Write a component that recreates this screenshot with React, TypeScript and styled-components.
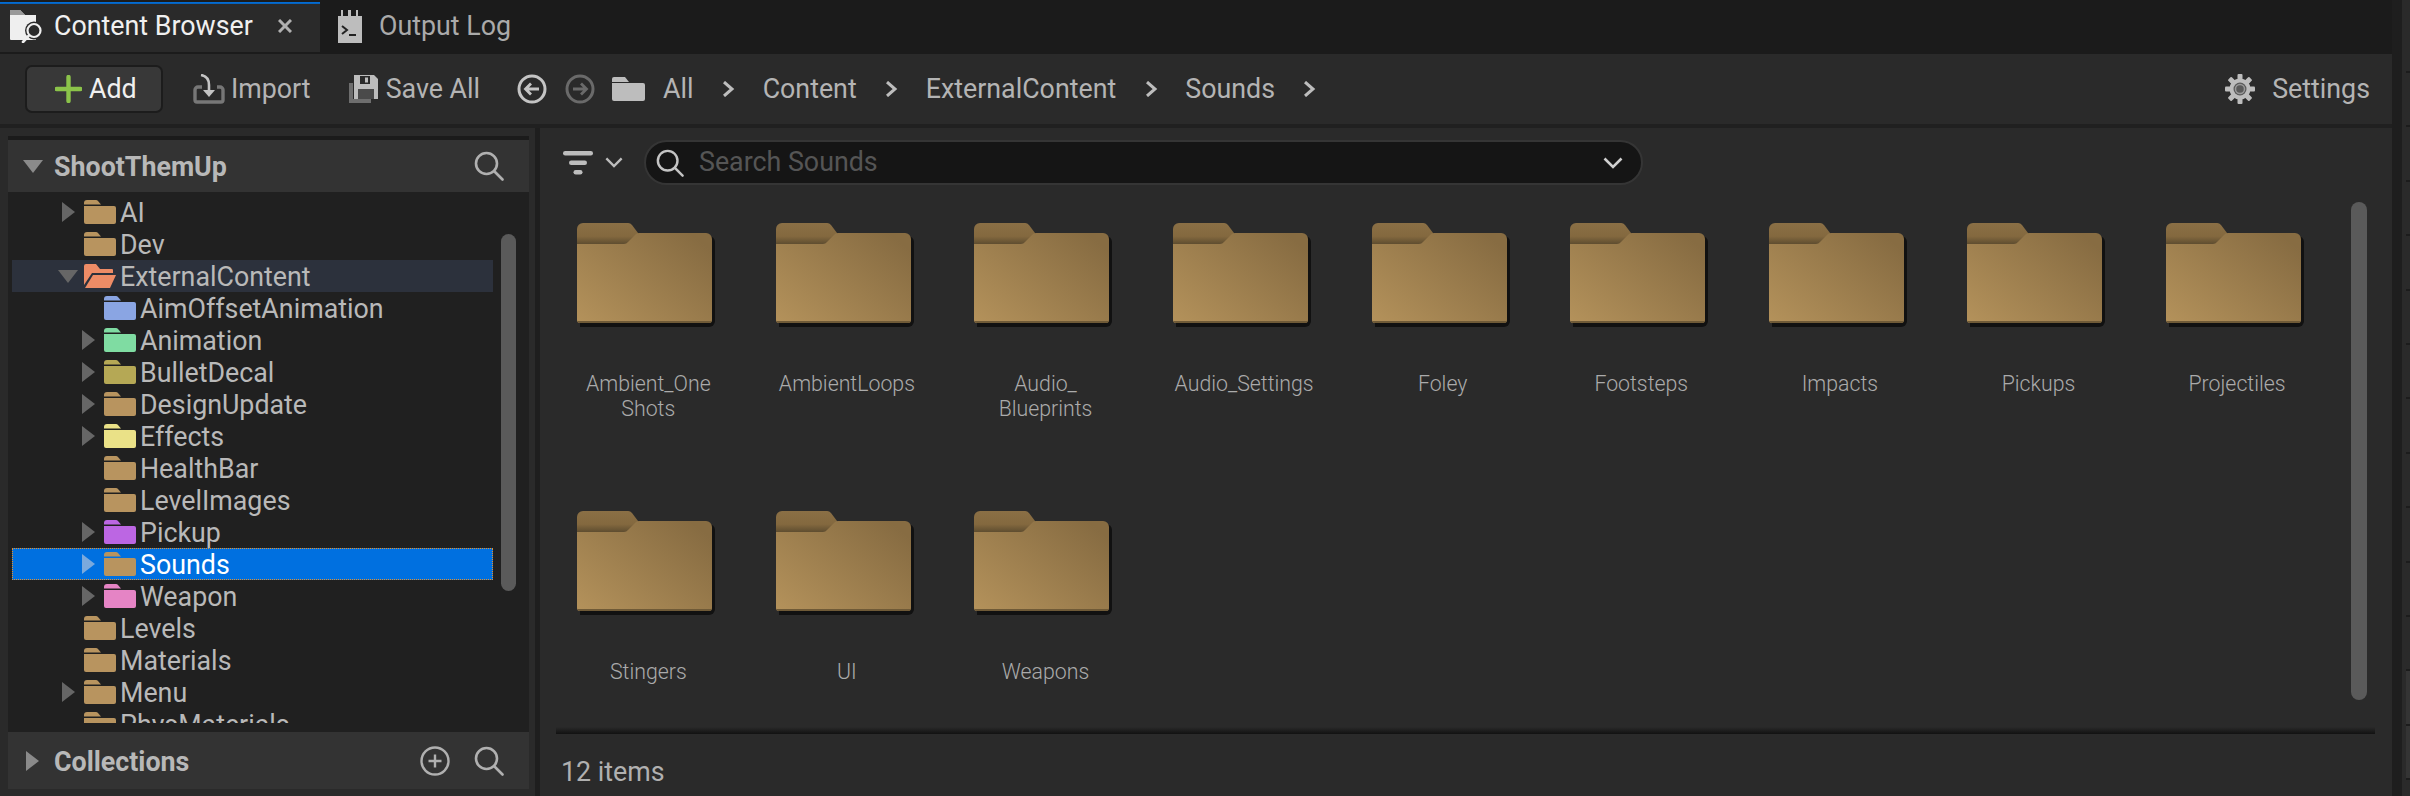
import React from 'react';
import styled, { createGlobalStyle } from 'styled-components';

const GlobalStyle = createGlobalStyle`
  html, body {
    margin: 0;
    padding: 0;
    background: #2a2a2a;
    overflow: hidden;
  }
  * {
    box-sizing: border-box;
  }
`;

const UI_FONT_SIZE = '26.8px';

const Page = styled.div`
  width: 2410px;
  height: 796px;
  display: flex;
  overflow: hidden;
  font-family: Roboto, 'Liberation Sans', sans-serif;
  color: #bcbcbc;
`;
const Main = styled.div`
  width: 2392px;
  display: flex;
  flex-direction: column;
`;
const EdgeGap = styled.div`
  width: 10px;
  background: #1e1e1e;
`;
const EdgeRail = styled.div`
  width: 8px;
  background: #2a2a2a;
  padding: 71px 0 0 4px;
`;
const EdgeTicks = styled.div`
  height: 100%;
  background:
    repeating-linear-gradient(
      to bottom,
      #1c1c1c 0,
      #1c1c1c 2px,
      transparent 2px,
      transparent 54.4px
    ),
    linear-gradient(#343434, #343434) 0 598px / 100% 109px no-repeat;
`;

const TabBar = styled.div`
  height: 54px;
  flex: none;
  display: flex;
  background: #1b1b1b;
  padding-bottom: 2px;
`;
const Tab = styled.div<{ $active?: boolean }>`
  display: flex;
  align-items: center;
  height: 52px;
  padding: 0 0 0 10px;
  width: ${(p) => (p.$active ? '320px' : 'auto')};
  margin-left: ${(p) => (p.$active ? '0' : '8px')};
  color: ${(p) => (p.$active ? '#f0f0f0' : '#aaa')};
  background: ${(p) =>
    p.$active ? 'linear-gradient(#1b1b1b 2px, #0070e0 2px, #0a5fb0 4px, #2a2a2a 4px)' : 'none'};
  font-size: ${UI_FONT_SIZE};
  svg {
    flex: none;
    margin-right: ${(p) => (p.$active ? '12px' : '17px')};
  }
`;
const TabClose = styled.span`
  margin-left: 25px;
  display: flex;
  svg {
    margin: 0;
  }
`;

const Toolbar = styled.div`
  height: 70px;
  flex: none;
  display: flex;
  align-items: center;
  background: #2a2a2a;
  padding-left: 25px;
  font-size: ${UI_FONT_SIZE};
`;
const AddButton = styled.div`
  width: 138px;
  height: 48px;
  display: flex;
  align-items: center;
  padding-left: 28px;
  gap: 7px;
  background: #383838;
  border: 2px solid #1c1c1c;
  border-radius: 7px;
  color: #f0f0f0;
  margin-right: 30px;
`;
const ToolButton = styled.div<{ $gap: number; $right: number }>`
  display: flex;
  align-items: center;
  gap: ${(p) => p.$gap}px;
  margin-right: ${(p) => p.$right}px;
  color: #b4b4b4;
`;
const NavButtons = styled.div`
  display: flex;
  align-items: center;
  gap: 18px;
`;
const NavArrow = styled.svg<{ $flip?: boolean }>`
  display: block;
  transform: ${(p) => (p.$flip ? 'scaleX(-1)' : 'none')};
`;
const Crumbs = styled.div`
  display: flex;
  align-items: center;
  margin-left: 17px;
  color: #b4b4b4;
  svg {
    flex: none;
  }
`;
const CrumbText = styled.span<{ $first?: boolean }>`
  margin: 0 28.5px 0 ${(p) => (p.$first ? '18px' : '27.5px')};
`;
const SettingsButton = styled.div`
  margin-left: auto;
  margin-right: 22px;
  display: flex;
  align-items: center;
  gap: 17px;
  color: #b4b4b4;
`;
const ToolbarGap = styled.div`
  height: 4px;
  flex: none;
  background: #202020;
`;

const Body = styled.div`
  flex: 1;
  display: flex;
  min-height: 0;
  background: #2a2a2a;
`;
const Sidebar = styled.aside`
  width: 527px;
  margin-left: 8px;
  padding: 8px 6px 7px 0;
  display: flex;
  flex-direction: column;
`;
const SectionHeader = styled.div<{ $tall?: boolean; $top?: boolean }>`
  height: ${(p) => (p.$tall ? '52px' : '57px')};
  flex: none;
  display: flex;
  align-items: center;
  background: #333;
  border-top: ${(p) => (p.$top ? '4px solid #1b1b1b' : 'none')};
  box-sizing: ${(p) => (p.$top ? 'content-box' : 'border-box')};
  font-size: ${UI_FONT_SIZE};
  font-weight: 700;
  color: #b8b8b8;
`;
const HeaderTitle = styled.span`
  padding-top: 2px;
`;
const HeaderArrow = styled.span<{ $open?: boolean }>`
  width: 0;
  height: 0;
  flex: none;
  ${(p) =>
    p.$open
      ? `border-left: 10px solid transparent;
         border-right: 10px solid transparent;
         border-top: 13px solid #8a8a8a;
         margin: 0 11px 0 15px;`
      : `border-top: 10px solid transparent;
         border-bottom: 10px solid transparent;
         border-left: 13px solid #8a8a8a;
         margin: 0 15px 0 18px;`}
`;
const HeaderActions = styled.div`
  margin-left: auto;
  margin-right: 25px;
  display: flex;
  align-items: center;
  gap: 24px;
`;
const Tree = styled.div`
  flex: 1;
  min-height: 0;
  background: #202020;
  padding: 4px 0 9px 4px;
  position: relative;
`;
const TreeClip = styled.div`
  height: 100%;
  overflow: hidden;
`;
const TreeScrollThumb = styled.div`
  position: absolute;
  left: 493px;
  top: 42px;
  width: 15px;
  height: 357px;
  border-radius: 8px;
  background: #5a5a5a;
`;
const Row = styled.div<{ $level: number; $state?: 'selected' | 'open' }>`
  width: 481px;
  height: 32px;
  display: flex;
  align-items: center;
  padding-left: ${(p) => 50 + p.$level * 20}px;
  font-size: ${UI_FONT_SIZE};
  color: ${(p) => (p.$state === 'selected' ? '#fff' : '#b9b9b9')};
  background: ${(p) =>
    p.$state === 'selected' ? '#0070e0' : p.$state === 'open' ? '#2c313c' : 'transparent'};
  outline: ${(p) => (p.$state === 'selected' ? '1px dotted #e8912a' : 'none')};
  outline-offset: -1px;
`;
const ExpanderSlot = styled.span`
  width: 22px;
  flex: none;
  display: flex;
`;
const ExpanderRight = styled.span<{ $light?: boolean }>`
  width: 0;
  height: 0;
  border-top: 10px solid transparent;
  border-bottom: 10px solid transparent;
  border-left: 13px solid ${(p) => (p.$light ? '#7aa9dd' : '#666')};
`;
const ExpanderDown = styled.span`
  width: 0;
  height: 0;
  margin-left: -4px;
  border-left: 10px solid transparent;
  border-right: 10px solid transparent;
  border-top: 13px solid #666;
`;
const TreeFolderArt = styled.svg`
  flex: none;
`;
const TreeLabel = styled.span`
  margin-left: 4px;
  padding-top: 1px;
  white-space: nowrap;
`;

const ContentPanel = styled.section`
  flex: 1;
  min-width: 0;
  border-left: 5px solid #1e1e1e;
  display: flex;
  flex-direction: column;
  position: relative;
`;
const FilterRow = styled.div`
  height: 45px;
  flex: none;
  margin-top: 12px;
  display: flex;
  align-items: center;
  padding-left: 23px;
`;
const FilterChevron = styled.span`
  display: flex;
  margin: 0 21px 0 12px;
`;
const SearchBox = styled.div`
  width: 999px;
  height: 45px;
  display: flex;
  align-items: center;
  padding: 0 18px 0 10px;
  border: 2px solid #353535;
  border-radius: 23px;
  background: #151515;
  color: #555;
  font-size: ${UI_FONT_SIZE};
  span {
    margin-left: 15px;
    flex: 1;
    padding-bottom: 2px;
  }
`;
const Grid = styled.div`
  flex: 1;
  min-height: 0;
  display: grid;
  grid-template-columns: repeat(9, 198.6px);
  grid-auto-rows: 288px;
  padding: 38px 0 0 9px;
  overflow: hidden;
`;
const Tile = styled.div`
  display: flex;
  flex-direction: column;
  align-items: center;
`;
const FolderArt = styled.svg`
  display: block;
  margin-right: 3px;
`;
const TileLabel = styled.div`
  margin-top: 42px;
  font-size: 21.3px;
  font-weight: 300;
  line-height: 25px;
  text-align: center;
  white-space: pre-line;
  color: #ababab;
`;
const GridScrollThumb = styled.div`
  position: absolute;
  left: 1811px;
  top: 74px;
  width: 16px;
  height: 498px;
  border-radius: 8px;
  background: #5a5a5a;
`;
const ShadowLine = styled.div`
  height: 7px;
  flex: none;
  margin: 0 17px 0 16px;
  background: linear-gradient(to bottom, rgba(17, 17, 17, 0), #111);
`;
const StatusBar = styled.div`
  height: 62px;
  flex: none;
  padding: 21px 0 0 21px;
  line-height: 34px;
  font-size: ${UI_FONT_SIZE};
  color: #b0b0b0;
`;

const SearchIcon = ({ size = 30, color = '#b0b0b0' }: { size?: number; color?: string }) => (
  <svg width={size} height={size} viewBox="0 0 30 30" fill="none" stroke={color} strokeWidth="2.6" strokeLinecap="round">
    <circle cx="12.5" cy="12.5" r="10.5" />
    <line x1="20.5" y1="20.5" x2="28.5" y2="28.5" />
  </svg>
);

const ContentBrowserIcon = () => (
  <svg width="32" height="34" viewBox="0 0 32 34">
    <path d="M0 1h10l5 5h11v24a1 1 0 0 1-1 1H1a1 1 0 0 1-1-1z" fill="#efefef" />
    <path d="M0 1h10l5 5H0z" fill="#9a9a9a" />
    <circle cx="24" cy="21.5" r="9" fill="#2a2a2a" />
    <circle cx="24" cy="21.5" r="6.5" fill="none" stroke="#efefef" strokeWidth="2.2" />
    <line x1="18.5" y1="27" x2="13" y2="33" stroke="#efefef" strokeWidth="2.6" strokeLinecap="round" />
  </svg>
);

const OutputLogIcon = () => (
  <svg width="24" height="33" viewBox="0 0 24 33">
    <path d="M0 6h3V0h2v6h5V0h3v6h5V0h2v6h4v27H0z" fill="#bdbdbd" />
    <path d="M4 16l5 4-5 4" fill="none" stroke="#222" strokeWidth="2" />
    <line x1="11" y1="25" x2="18" y2="25" stroke="#222" strokeWidth="2" />
  </svg>
);

const CloseIcon = () => (
  <svg width="14" height="14" viewBox="0 0 14 14" stroke="#b0b0b0" strokeWidth="3">
    <line x1="1" y1="1" x2="13" y2="13" />
    <line x1="13" y1="1" x2="1" y2="13" />
  </svg>
);

const PlusIcon = () => (
  <svg width="27" height="28" viewBox="0 0 27 28" stroke="#8bc34a" strokeWidth="4.4" strokeLinecap="round">
    <line x1="13.5" y1="2" x2="13.5" y2="26" />
    <line x1="1.5" y1="14" x2="25.5" y2="14" />
  </svg>
);

const ImportIcon = () => (
  <svg width="32" height="30" viewBox="0 0 32 30" fill="none">
    <path d="M9 13H5a3 3 0 0 0-3 3v10a2 2 0 0 0 2 2h24a2 2 0 0 0 2-2V16a3 3 0 0 0-3-3h-3" stroke="#777" strokeWidth="3.4" />
    <path d="M8 1c6 1 8 5 8 10v8" stroke="#c4c4c4" strokeWidth="2.6" />
    <path d="M10 16h12l-6 7z" fill="#c4c4c4" />
  </svg>
);

const SaveIcon = () => (
  <svg width="29" height="28" viewBox="0 0 29 28">
    <path d="M0 8h4v16h18v4H0z" fill="#6e6e6e" />
    <path d="M5 0h20l4 4v20H5z" fill="#bdbdbd" />
    <rect x="11" y="1" width="10" height="8" fill="#2a2a2a" />
    <rect x="16" y="2.5" width="3" height="5" fill="#bdbdbd" />
    <rect x="9" y="14" width="16" height="10" fill="#4a4a4a" />
  </svg>
);

const CircleArrow = ({ back, color }: { back?: boolean; color: string }) => (
  <NavArrow $flip={!back} width="30" height="30" viewBox="0 0 30 30" fill="none" stroke={color} strokeWidth="3">
    <circle cx="15" cy="15" r="13" />
    <path d="M22 15H9M14 9.5L8.5 15l5.5 5.5" strokeWidth="2.8" />
  </NavArrow>
);

const CrumbFolder = () => (
  <svg width="33" height="24" viewBox="0 0 33 24" fill="#bdbdbd">
    <path d="M0 2a2 2 0 0 1 2-2h11l4 5H0z" />
    <path d="M0 6h31a2 2 0 0 1 2 2v14a2 2 0 0 1-2 2H2a2 2 0 0 1-2-2z" />
  </svg>
);

const CrumbChevron = () => (
  <svg width="13" height="16" viewBox="0 0 13 16" fill="none" stroke="#bdbdbd" strokeWidth="3">
    <path d="M2 1l8 7-8 7" />
  </svg>
);

const GearIcon = () => (
  <svg width="30" height="30" viewBox="0 0 30 30">
    {[0, 45, 90, 135, 180, 225, 270, 315].map((a) => (
      <rect key={a} x="12.5" y="0" width="5" height="7" rx="1" fill="#bdbdbd" transform={`rotate(${a} 15 15)`} />
    ))}
    <circle cx="15" cy="15" r="10.5" fill="#bdbdbd" />
    <circle cx="15" cy="15" r="6.5" fill="#5a5a5a" />
    <circle cx="15" cy="15" r="4.5" fill="none" stroke="#999" strokeWidth="1.5" />
  </svg>
);

const FilterIcon = () => (
  <svg width="30" height="24" viewBox="0 0 30 24" fill="#bdbdbd">
    <rect x="0" y="0" width="30" height="4.5" rx="2.2" />
    <rect x="6" y="9.5" width="18" height="4.5" rx="2.2" />
    <rect x="10.5" y="19" width="9" height="4.5" rx="2.2" />
  </svg>
);

const SmallChevron = ({ width, color }: { width: number; color: string }) => (
  <svg width={width} height={width * 0.6} viewBox="0 0 20 12" fill="none" stroke={color} strokeWidth="2.6">
    <path d="M1.5 1.5L10 10l8.5-8.5" />
  </svg>
);

const CirclePlusIcon = () => (
  <svg width="30" height="30" viewBox="0 0 30 30" fill="none" stroke="#b0b0b0" strokeWidth="2.4">
    <circle cx="15" cy="15" r="13.5" />
    <path d="M15 8.5v13M8.5 15h13" />
  </svg>
);

const TreeFolder = ({ color }: { color: string }) => (
  <TreeFolderArt width="32" height="24" viewBox="0 0 32 24" fill={color}>
    <path d="M0 3a3 3 0 0 1 3-3h9a3 3 0 0 1 2 1l3 3.5H0z" />
    <path d="M0 6h30a2 2 0 0 1 2 2v14a2 2 0 0 1-2 2H2a2 2 0 0 1-2-2z" />
  </TreeFolderArt>
);

const OpenTreeFolder = ({ color }: { color: string }) => (
  <TreeFolderArt width="32" height="24" viewBox="0 0 32 24" fill={color}>
    <path d="M0 2a2 2 0 0 1 2-2h10l4 5h12a1 1 0 0 1 1 1v3H8L0 21z" />
    <path d="M9 11h23l-6 13H1z" />
  </TreeFolderArt>
);

const BigFolder = () => (
  <FolderArt width="139" height="106" viewBox="0 0 139 106">
    <defs>
      <linearGradient id="folderFront" x1="0" y1="1" x2="1" y2="0.2">
        <stop offset="0" stopColor="#b4925b" />
        <stop offset="1" stopColor="#876c42" />
      </linearGradient>
      <linearGradient id="folderTab" x1="0" y1="0" x2="0" y2="1">
        <stop offset="0" stopColor="#8a6f45" />
        <stop offset="0.6" stopColor="#84693f" />
        <stop offset="1" stopColor="#5a4a2e" />
      </linearGradient>
    </defs>
    <path d="M6 13h126a6 6 0 0 1 6 6v79a6 6 0 0 1-6 6H3v-4z" fill="#0e0e0e" opacity="0.9" />
    <path d="M0 6a6 6 0 0 1 6-6h44a6 6 0 0 1 5 2l6 8v12H0z" fill="url(#folderTab)" />
    <path d="M0 21h47a5 5 0 0 0 4-2l8-8a5 5 0 0 1 3-1h67a6 6 0 0 1 6 6v81a3 3 0 0 1-3 3H3a3 3 0 0 1-3-3z" fill="url(#folderFront)" />
    <path d="M0 98h135a3 3 0 0 1-3 2H3a3 3 0 0 1-3-2z" fill="#6f5a37" />
  </FolderArt>
);

type TreeItem = {
  name: string;
  level: number;
  color: string;
  arrow?: boolean;
  state?: 'selected' | 'open';
};

const TAN = '#b8945f';
const treeItems: TreeItem[] = [
  { name: 'AI', level: 0, color: TAN, arrow: true },
  { name: 'Dev', level: 0, color: TAN },
  { name: 'ExternalContent', level: 0, color: '#ee8c66', arrow: true, state: 'open' },
  { name: 'AimOffsetAnimation', level: 1, color: '#8aa5e3' },
  { name: 'Animation', level: 1, color: '#7fdca2', arrow: true },
  { name: 'BulletDecal', level: 1, color: '#b5a855', arrow: true },
  { name: 'DesignUpdate', level: 1, color: TAN, arrow: true },
  { name: 'Effects', level: 1, color: '#eae187', arrow: true },
  { name: 'HealthBar', level: 1, color: TAN },
  { name: 'LevelImages', level: 1, color: TAN },
  { name: 'Pickup', level: 1, color: '#bc66e3', arrow: true },
  { name: 'Sounds', level: 1, color: TAN, arrow: true, state: 'selected' },
  { name: 'Weapon', level: 1, color: '#e584c5', arrow: true },
  { name: 'Levels', level: 0, color: TAN },
  { name: 'Materials', level: 0, color: TAN },
  { name: 'Menu', level: 0, color: TAN, arrow: true },
  { name: 'PhysMaterials', level: 0, color: TAN },
];

const folders = [
  'Ambient_One\nShots',
  'AmbientLoops',
  'Audio_\nBlueprints',
  'Audio_Settings',
  'Foley',
  'Footsteps',
  'Impacts',
  'Pickups',
  'Projectiles',
  'Stingers',
  'UI',
  'Weapons',
];

const crumbs = ['All', 'Content', 'ExternalContent', 'Sounds'];

const App = () => (
  <>
    <GlobalStyle />
    <Page>
      <Main>
        <TabBar>
          <Tab $active>
            <ContentBrowserIcon />
            Content Browser
            <TabClose>
              <CloseIcon />
            </TabClose>
          </Tab>
          <Tab>
            <OutputLogIcon />
            Output Log
          </Tab>
        </TabBar>
        <Toolbar>
          <AddButton>
            <PlusIcon />
            Add
          </AddButton>
          <ToolButton $gap={6} $right={38}>
            <ImportIcon />
            Import
          </ToolButton>
          <ToolButton $gap={8} $right={37}>
            <SaveIcon />
            Save All
          </ToolButton>
          <NavButtons>
            <CircleArrow back color="#c4c4c4" />
            <CircleArrow color="#6a6a6a" />
          </NavButtons>
          <Crumbs>
            <CrumbFolder />
            {crumbs.map((c, i) => (
              <React.Fragment key={c}>
                <CrumbText $first={i === 0}>{c}</CrumbText>
                <CrumbChevron />
              </React.Fragment>
            ))}
          </Crumbs>
          <SettingsButton>
            <GearIcon />
            Settings
          </SettingsButton>
        </Toolbar>
        <ToolbarGap />
        <Body>
          <Sidebar>
            <SectionHeader $tall $top>
              <HeaderArrow $open />
              <HeaderTitle>ShootThemUp</HeaderTitle>
              <HeaderActions>
                <SearchIcon />
              </HeaderActions>
            </SectionHeader>
            <Tree>
              <TreeClip>
                {treeItems.map((item) => (
                  <Row key={item.name} $level={item.level} $state={item.state}>
                    <ExpanderSlot>
                      {item.arrow &&
                        (item.state === 'open' ? (
                          <ExpanderDown />
                        ) : (
                          <ExpanderRight $light={item.state === 'selected'} />
                        ))}
                    </ExpanderSlot>
                    {item.state === 'open' ? (
                      <OpenTreeFolder color={item.color} />
                    ) : (
                      <TreeFolder color={item.color} />
                    )}
                    <TreeLabel>{item.name}</TreeLabel>
                  </Row>
                ))}
              </TreeClip>
              <TreeScrollThumb />
            </Tree>
            <SectionHeader>
              <HeaderArrow />
              <HeaderTitle>Collections</HeaderTitle>
              <HeaderActions>
                <CirclePlusIcon />
                <SearchIcon />
              </HeaderActions>
            </SectionHeader>
          </Sidebar>
          <ContentPanel>
            <FilterRow>
              <FilterIcon />
              <FilterChevron>
                <SmallChevron width={18} color="#bdbdbd" />
              </FilterChevron>
              <SearchBox>
                <SearchIcon size={28} color="#c4c4c4" />
                <span>Search Sounds</span>
                <SmallChevron width={20} color="#d0d0d0" />
              </SearchBox>
            </FilterRow>
            <Grid>
              {folders.map((f) => (
                <Tile key={f}>
                  <BigFolder />
                  <TileLabel>{f}</TileLabel>
                </Tile>
              ))}
            </Grid>
            <GridScrollThumb />
            <ShadowLine />
            <StatusBar>12 items</StatusBar>
          </ContentPanel>
        </Body>
      </Main>
      <EdgeGap />
      <EdgeRail>
        <EdgeTicks />
      </EdgeRail>
    </Page>
  </>
);

export default App;
